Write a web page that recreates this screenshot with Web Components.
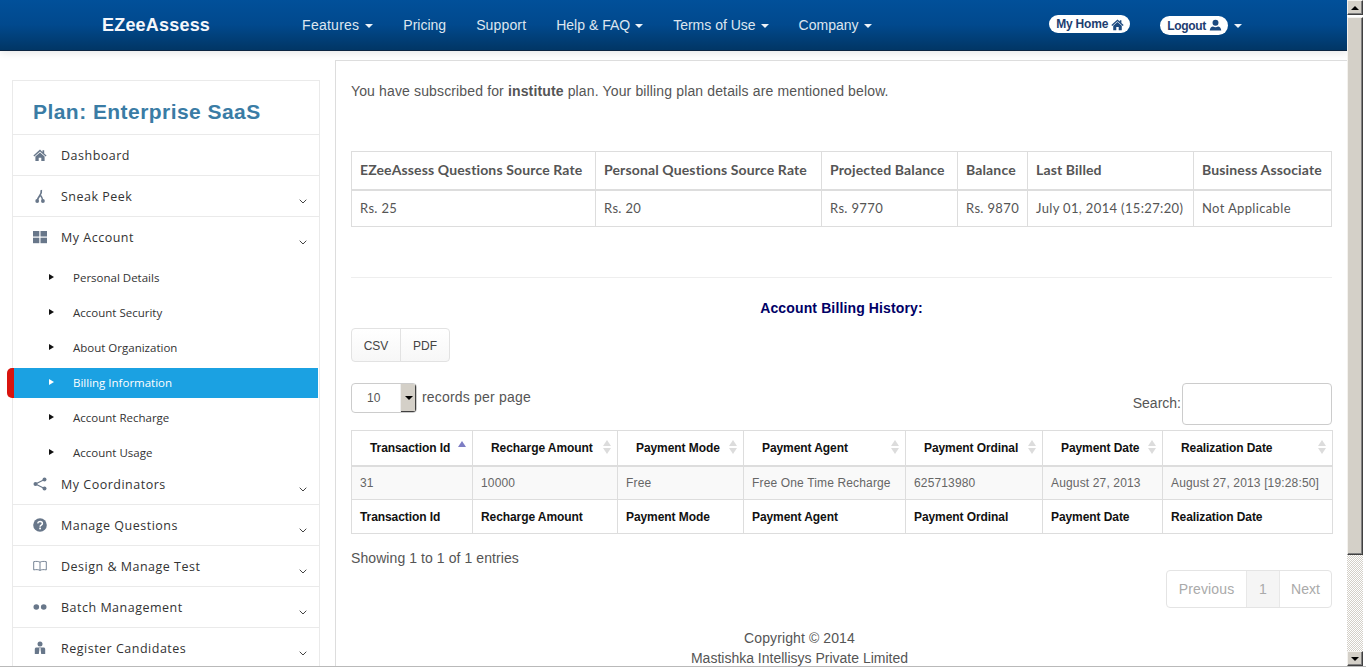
<!DOCTYPE html>
<html lang="en">
<head>
<meta charset="utf-8">
<title>EZeeAssess - Billing Information</title>
<style>
  html, body { margin: 0; padding: 0; background: #fff; overflow: hidden; }
  body { font-family: "Liberation Sans", Arial, sans-serif; font-size: 14px; color: #555; }
</style>
</head>
<body>
<ez-page>
  <ez-header slot="header"></ez-header>
  <ez-sidebar slot="side" plan="Plan: Enterprise SaaS">
    <ez-side-item icon="home" label="Dashboard" flat></ez-side-item>
    <ez-side-item icon="fork" label="Sneak Peek"></ez-side-item>
    <ez-side-item icon="grid" label="My Account" open>
      <ez-sub-item>Personal Details</ez-sub-item>
      <ez-sub-item>Account Security</ez-sub-item>
      <ez-sub-item>About Organization</ez-sub-item>
      <ez-sub-item active>Billing Information</ez-sub-item>
      <ez-sub-item>Account Recharge</ez-sub-item>
      <ez-sub-item>Account Usage</ez-sub-item>
    </ez-side-item>
    <ez-side-item icon="share" label="My Coordinators"></ez-side-item>
    <ez-side-item icon="question" label="Manage Questions"></ez-side-item>
    <ez-side-item icon="book" label="Design &amp; Manage Test"></ez-side-item>
    <ez-side-item icon="dots" label="Batch Management"></ez-side-item>
    <ez-side-item icon="person" label="Register Candidates"></ez-side-item>
  </ez-sidebar>
  <ez-billing slot="main"></ez-billing>
</ez-page>

<script>
const ICONS = {
  home: '<path d="M7 1.600 .4 7.500l.9 1L7 3.400l5.700 5.100.9-1-2.400-2.100V2.300H9.500v1.600Z"/><path d="M2.400 8.400 7 4.400l4.600 4v4.700H8.300V9.800H5.700v3.300H2.400Z"/>',
  fork: '<path d="M8.300 1c.4 2.500-.5 4.200-1.600 5.800C5.500 8.500 4.600 9.700 4.300 11.500" fill="none" stroke="currentColor" stroke-width="1.700"/><path d="M7.400 6.200c1.200 1.400 2.100 3 2.400 5.300" fill="none" stroke="currentColor" stroke-width="1.500"/><circle cx="4.200" cy="12" r="1.900"/><circle cx="9.900" cy="12" r="1.900"/>',
  grid: '<rect x="0" y="1" width="6.300" height="5.500"/><rect x="7.500" y="1" width="6.500" height="5.500"/><rect x="0" y="7.700" width="6.300" height="5.500"/><rect x="7.500" y="7.700" width="6.500" height="5.500"/>',
  share: '<circle cx="11.500" cy="2.500" r="2"/><circle cx="2.500" cy="7" r="2"/><circle cx="11.500" cy="11.500" r="2"/><path d="M11.500 2.500 2.500 7l9 4.500" fill="none" stroke="currentColor" stroke-width="1.200"/>',
  question: '<circle cx="7" cy="7" r="6.800"/><path d="M4.700 5.400C4.900 4.100 5.900 3.500 7 3.500c1.300 0 2.400.8 2.400 2 0 1.700-2.300 1.700-2.300 3.300" fill="none" stroke="#fff" stroke-width="1.500"/><rect x="6.200" y="9.600" width="1.800" height="1.700" fill="#fff"/>',
  book: '<path d="M7 3.200C5.600 2.300 3 2.200.7 2.700v8.200C3 10.400 5.600 10.500 7 11.400c1.400-.9 4-1 6.300-.5V2.700C11 2.200 8.400 2.300 7 3.200Zm0 0v8.200" fill="none" stroke="currentColor" stroke-width=".9"/>',
  dots: '<circle cx="3.300" cy="7" r="2.800"/><circle cx="10.700" cy="7" r="2.800"/>',
  person: '<circle cx="7" cy="3" r="2.500"/><path d="M1.800 13V8.200c0-1 .7-1.700 1.700-1.700h7c1 0 1.700.7 1.700 1.700V13H8.200L7.600 8.500l.3-1.200H6.100l.3 1.200L5.800 13Z"/>'
};

// small base so each element only states its markup and styles
class EzElement extends HTMLElement {
  connectedCallback() {
    if (this.shadowRoot) return;
    const template = document.createElement("template");
    template.innerHTML = this.render();
    this.attachShadow({ mode: "open" }).appendChild(template.content.cloneNode(true));
  }
}

class EzPage extends EzElement {
  render() {
    return `
    <style>
      :host { display: block; width: 1366px; height: 670px; }
      .frame { display: flex; height: 666px; border-bottom: 1px solid #b9b9b9; overflow: hidden; }
      .content { width: 1347px; flex: none; overflow: hidden; }
      .columns { display: flex; align-items: flex-start; }
    </style>
    <div class="frame">
      <div class="content">
        <slot name="header"></slot>
        <div class="columns">
          <slot name="side"></slot>
          <slot name="main"></slot>
        </div>
      </div>
      <ez-scrollbar></ez-scrollbar>
    </div>`;
  }
}

class EzScrollbar extends EzElement {
  render() {
    return `
    <style>
      :host { display: flex; flex-direction: column; width: 16px; height: 666px; flex: none; }
      .btn, .thumb { background: #d4d0c8; box-sizing: border-box; border: 1px solid; border-color: #f4f2ee #404040 #404040 #f4f2ee; box-shadow: inset -1px -1px 0 #808080; }
      .btn { height: 15px; display: flex; align-items: center; justify-content: center; flex: none; }
      .thumb { height: 538px; margin-top: 2px; flex: none; }
      .track { flex: 1; background: repeating-conic-gradient(#d4d0c8 0 25%, #fff 0 50%) 0 0 / 2px 2px; }
      .up { width: 0; height: 0; border: 4px solid transparent; border-top: 0; border-bottom: 4px solid #000; }
      .down { width: 0; height: 0; border: 4px solid transparent; border-bottom: 0; border-top: 4px solid #000; }
    </style>
    <div class="btn"><div class="up"></div></div>
    <div class="thumb"></div>
    <div class="track"></div>
    <div class="btn"><div class="down"></div></div>`;
  }
}

class EzHeader extends EzElement {
  render() {
    return `
    <style>
      :host { display: block; position: relative; z-index: 2; }
      header { display: flex; align-items: center; height: 50px; padding: 0 105px 0 102px; background: linear-gradient(#01509a 0, #01498d 50%, #013665 100%); border-bottom: 1px solid #0b2440; box-shadow: 0 2px 8px rgba(0,0,0,.1); color: #fff; }
      .brand { font-size: 18px; font-weight: bold; letter-spacing: .2px; margin-right: 92px; color: #f4f7fb; }
      nav { display: flex; gap: 30px; font-size: 14px; color: #dde6f0; }
      nav span { display: flex; align-items: center; gap: 5px; }
      nav span:nth-child(1) { letter-spacing: .25px; gap: 6px; }
      nav span:nth-child(3) { letter-spacing: .15px; }
      .caret { width: 0; height: 0; border: 4px solid transparent; border-bottom: 0; border-top-color: #eef3f8; margin-top: 1px; }
      .right { margin-left: auto; display: flex; align-items: center; }
      .pill { display: flex; align-items: center; gap: 3px; background: #fff; color: #1d3d70; font-size: 12px; font-weight: bold; border-radius: 10px; }
      .home { height: 18px; padding: 0 6px 0 7px; margin-right: 30px; margin-top: -2px; letter-spacing: -.2px; }
      .logout { height: 19px; padding: 0 6px 0 7px; margin-top: 1px; letter-spacing: -.3px; }
      .right .caret { margin-left: 6px; }
      svg { fill: #1d4a80; display: block; }
    </style>
    <header>
      <div class="brand">EZeeAssess</div>
      <nav>
        <span>Features <i class="caret"></i></span>
        <span>Pricing</span>
        <span>Support</span>
        <span>Help &amp; FAQ <i class="caret"></i></span>
        <span>Terms of Use <i class="caret"></i></span>
        <span>Company <i class="caret"></i></span>
      </nav>
      <div class="right">
        <div class="pill home">My Home <svg width="13" height="13" viewBox="0 0 14 14">${ICONS.home}</svg></div>
        <div class="pill logout">Logout <svg width="13" height="13" viewBox="0 0 14 14"><circle cx="7" cy="4" r="3.200"/><path d="M.8 12.500c0-3 2-4.300 3.500-4.500 1.600 1 3.800 1 5.400 0 1.500.2 3.500 1.500 3.500 4.500Z"/></svg></div>
        <i class="caret"></i>
      </div>
    </header>`;
  }
}

class EzSidebar extends EzElement {
  render() {
    return `
    <style>
      :host { display: block; width: 308px; flex: none; margin: 29px 0 0 12px; }
      .panel { border: 1px solid #eaeaea; border-bottom: 0; background: #fff; }
      h2 { margin: 0; height: 53px; line-height: 62px; padding-left: 20px; font-size: 21px; font-weight: bold; color: #3a7ca5; border-bottom: 1px solid #eaeaea; letter-spacing: .45px; }
    </style>
    <div class="panel">
      <h2>${this.getAttribute("plan")}</h2>
      <slot></slot>
    </div>`;
  }
}

class EzSideItem extends EzElement {
  render() {
    const isOpen = this.hasAttribute("open");
    const chevron = this.hasAttribute("flat") ? "" :
      `<svg class="chev" width="8" height="5" viewBox="0 0 8 5"><path d="M.7.7 4 4 7.300.7" fill="none" stroke="#444" stroke-width="1"/></svg>`;
    return `
    <style>
      :host { display: block; }
      .row { display: flex; align-items: center; height: 40px; padding-left: 20px; font-family: "Open Sans", sans-serif; font-size: 12.5px; letter-spacing: .5px; color: #333; border-bottom: 1px solid #eaeaea; }
      .open { border-bottom: 0; height: 40px; padding-bottom: 1px; }
      .icon { width: 14px; height: 14px; fill: #68778a; color: #68778a; flex: none; margin-right: 14px; }
      .chev { margin-left: auto; margin-right: 12px; margin-top: 11px; }
      .sub { display: flex; flex-direction: column; gap: 5px; padding-top: 5px; margin-bottom: -4px; }
      :host(:not([open])) .sub { display: none; }
    </style>
    <div class="row ${isOpen ? "open" : ""}">
      <svg class="icon" viewBox="0 0 14 14">${ICONS[this.getAttribute("icon")]}</svg>
      <span>${this.getAttribute("label")}</span>
      ${chevron}
    </div>
    <div class="sub"><slot></slot></div>`;
  }
}

class EzSubItem extends EzElement {
  render() {
    return `
    <style>
      :host { display: flex; align-items: center; box-sizing: border-box; height: 30px; margin: 0 1px; padding: 0 0 2px 35px; font-family: "Open Sans", sans-serif; font-size: 11.5px; color: #333; position: relative; }
      :host([active]) { background: #1ba1e2; color: #fff; }
      :host([active])::before { content: ""; position: absolute; left: -7px; top: 0; width: 7px; height: 30px; background: #d9140e; border-radius: 5px 0 0 5px; }
      .tri { width: 0; height: 0; border: 3px solid transparent; border-left: 5px solid currentColor; border-right: 0; margin-right: 19px; }
      :host(:not([active])) .tri { color: #111; }
    </style>
    <i class="tri"></i><slot></slot>`;
  }
}

class EzPlanTable extends EzElement {
  render() {
    return `
    <style>
      :host { display: block; }
      table { border-collapse: collapse; table-layout: fixed; width: 980px; font-family: Lato, sans-serif; color: #555; }
      th, td { border: 1px solid #ddd; padding: 0 8px; text-align: left; white-space: nowrap; box-sizing: border-box; }
      th { border-bottom-width: 2px; padding-bottom: 2px; font-size: 14px; letter-spacing: .14px; font-weight: bold; height: 38px; }
      td { height: 37px; font-size: 13px; letter-spacing: .35px; }
    </style>
    <table>
      <colgroup><col style="width:244px"><col style="width:226px"><col style="width:136px"><col style="width:70px"><col style="width:166px"><col style="width:138px"></colgroup>
      <tr><th>EZeeAssess Questions Source Rate</th><th>Personal Questions Source Rate</th><th>Projected Balance</th><th>Balance</th><th>Last Billed</th><th>Business Associate</th></tr>
      <tr><td>Rs. 25</td><td>Rs. 20</td><td>Rs. 9770</td><td>Rs. 9870</td><td>July 01, 2014 (15:27:20)</td><td>Not Applicable</td></tr>
    </table>`;
  }
}

class EzHistoryTable extends EzElement {
  render() {
    const cols = ["Transaction Id", "Recharge Amount", "Payment Mode", "Payment Agent", "Payment Ordinal", "Payment Date", "Realization Date"];
    const vals = ["31", "10000", "Free", "Free One Time Recharge", "625713980", "August 27, 2013", "August 27, 2013 [19:28:50]"];
    const widths = [121, 145, 126, 162, 137, 120, 170];
    const both = `<svg class="sort" width="8" height="14" viewBox="0 0 8 14"><path d="M4 0 8 6H0Z" fill="#dcdcdc"/><path d="M4 14 0 8h8Z" fill="#dcdcdc"/></svg>`;
    const up = `<svg class="sort first" width="8" height="6" viewBox="0 0 8 6"><path d="M4 0 8 6H0Z" fill="#7d7dc4"/></svg>`;
    return `
    <style>
      :host { display: block; }
      table { border-collapse: collapse; table-layout: fixed; width: 981px; font-size: 12px; }
      th, td { border: 1px solid #ddd; padding: 0 8px; text-align: left; white-space: nowrap; box-sizing: border-box; overflow: hidden; }
      th { letter-spacing: -.08px; }
      thead th { height: 35px; border-bottom-width: 2px; padding-left: 18px; color: #111; position: relative; }
      tbody td { height: 34px; background: #f9f9f9; color: #666; letter-spacing: .15px; }
      tfoot th { height: 34px; color: #111; }
      .sort { position: absolute; right: 6px; top: 9px; }
      .first { top: 10px; }
    </style>
    <table>
      <colgroup>${widths.map(w => `<col style="width:${w}px">`).join("")}</colgroup>
      <thead><tr>${cols.map((c, i) => `<th>${c}${i === 0 ? up : both}</th>`).join("")}</tr></thead>
      <tbody><tr>${vals.map(v => `<td>${v}</td>`).join("")}</tr></tbody>
      <tfoot><tr>${cols.map(c => `<th>${c}</th>`).join("")}</tr></tfoot>
    </table>`;
  }
}

class EzPager extends EzElement {
  render() {
    return `
    <style>
      :host { display: flex; justify-content: flex-end; }
      .pager { display: flex; height: 38px; box-sizing: border-box; border: 1px solid #e4e4e4; border-radius: 4px; color: #aaa; font-size: 14px; line-height: 36px; text-align: center; }
      span { display: block; box-sizing: border-box; }
      .prev { width: 79px; letter-spacing: .15px; }
      .cur { width: 34px; background: #f5f5f5; border: solid #e8e8e8; border-width: 0 1px; }
      .next { width: 51px; }
    </style>
    <div class="pager"><span class="prev">Previous</span><span class="cur">1</span><span class="next">Next</span></div>`;
  }
}

class EzBilling extends EzElement {
  render() {
    return `
    <style>
      :host { display: block; flex: 1; min-width: 0; margin: 9px 0 0 15px; }
      .panel { border: 1px solid #ddd; border-width: 1px 0 0 1px; padding: 20px 15px 0; height: 700px; box-sizing: border-box; }
      p { margin: 0; line-height: 20px; }
      .intro { letter-spacing: .14px; }
      ez-plan-table { margin-top: 50px; }
      hr { border: 0; border-top: 1px solid #eee; margin: 50px 0 0; }
      h4 { margin: 20px 0 0; font-size: 14px; line-height: 20px; color: #000066; text-align: center; letter-spacing: .13px; }
      .tools { display: inline-flex; margin-top: 10px; height: 34px; box-sizing: border-box; border: 1px solid #e2e2e2; border-radius: 4px; background: linear-gradient(#fff, #f7f7f7); font-size: 12px; color: #444; vertical-align: top; }
      .tools span { display: flex; align-items: center; justify-content: center; width: 48px; padding-top: 2px; box-sizing: border-box; }
      .tools span:first-child { width: 49px; border-right: 1px solid #e2e2e2; }
      .bar { display: flex; justify-content: space-between; height: 42px; margin-top: 21px; }
      .len { display: flex; align-items: flex-start; gap: 5px; line-height: 28px; letter-spacing: .19px; }
      .select { display: flex; width: 66px; height: 30px; box-sizing: border-box; border: 1px solid #ccc; border-radius: 4px; font-size: 12px; color: #555; overflow: hidden; letter-spacing: 0; }
      .select b { flex: 1; font-weight: normal; padding-left: 15px; line-height: 28px; }
      .arrow { width: 15px; background: #d4d0c8; border-left: 1px solid #eee; box-shadow: inset -1px -1px 0 #404040; display: flex; align-items: center; justify-content: center; }
      .arrow i { width: 0; height: 0; border: 4px solid transparent; border-bottom: 0; border-top-color: #000; }
      .search { display: flex; align-items: flex-start; gap: 1px; }
      .search span { line-height: 40px; }
      .search div { width: 150px; height: 42px; box-sizing: border-box; border: 1px solid #ccc; border-radius: 4px; }
      ez-history-table { margin-top: 5px; }
      .info { margin-top: 14px; letter-spacing: .08px; }
      ez-pager { margin-top: 2px; }
      .foot { margin-top: 20px; padding-right: 84px; text-align: center; }
      .foot p:first-child { letter-spacing: .1px; }
    </style>
    <div class="panel">
      <p class="intro">You have subscribed for <b>institute</b> plan. Your billing plan details are mentioned below.</p>
      <ez-plan-table></ez-plan-table>
      <hr>
      <h4>Account Billing History:</h4>
      <div class="tools"><span>CSV</span><span>PDF</span></div>
      <div class="bar">
        <div class="len"><div class="select"><b>10</b><div class="arrow"><i></i></div></div> records per page</div>
        <div class="search"><span>Search:</span><div></div></div>
      </div>
      <ez-history-table></ez-history-table>
      <p class="info">Showing 1 to 1 of 1 entries</p>
      <ez-pager></ez-pager>
      <div class="foot"><p>Copyright © 2014</p><p>Mastishka Intellisys Private Limited</p></div>
    </div>`;
  }
}

customElements.define("ez-page", EzPage);
customElements.define("ez-scrollbar", EzScrollbar);
customElements.define("ez-header", EzHeader);
customElements.define("ez-sidebar", EzSidebar);
customElements.define("ez-side-item", EzSideItem);
customElements.define("ez-sub-item", EzSubItem);
customElements.define("ez-plan-table", EzPlanTable);
customElements.define("ez-history-table", EzHistoryTable);
customElements.define("ez-pager", EzPager);
customElements.define("ez-billing", EzBilling);
</script>
</body>
</html>
